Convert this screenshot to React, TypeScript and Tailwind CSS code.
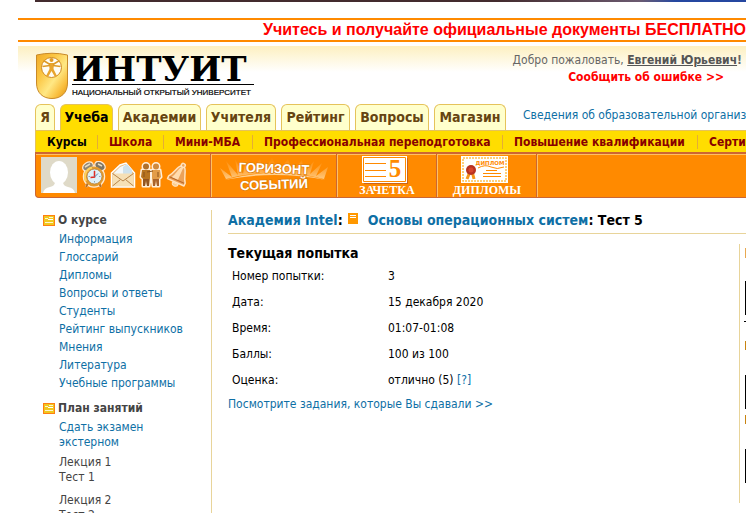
import React from "react";

const tabs = [
  { label: "Я", width: "w-5" },
  { label: "Учеба", width: "w-[53px]", active: true },
  { label: "Академии", width: "w-[83px]" },
  { label: "Учителя", width: "w-[70px]" },
  { label: "Рейтинг", width: "w-[69px]" },
  { label: "Вопросы", width: "w-[74px]" },
  { label: "Магазин", width: "w-[72px]" },
];

const sections = [
  { label: "Курсы", width: "w-[62px]", active: true },
  { label: "Школа", width: "w-[66px]" },
  { label: "Мини-МБА", width: "w-[89px]" },
  { label: "Профессиональная переподготовка", width: "w-[250px]" },
  { label: "Повышение квалификации", width: "w-[195px]" },
  { label: "Сертификация", width: "w-[140px]" },
];

const courseLinks = [
  "Информация",
  "Глоссарий",
  "Дипломы",
  "Вопросы и ответы",
  "Студенты",
  "Рейтинг выпускников",
  "Мнения",
  "Литература",
  "Учебные программы",
];

function Shield() {
  return (
    <svg width="34" height="48" viewBox="0 0 34 48" className="shrink-0" aria-hidden="true">
      <defs>
        <linearGradient id="gold" x1="0" y1="0" x2="1" y2="1">
          <stop offset="0" stopColor="#f0aa28" />
          <stop offset="0.3" stopColor="#fbc440" />
          <stop offset="0.58" stopColor="#ffe884" />
          <stop offset="0.8" stopColor="#f9bd3c" />
          <stop offset="1" stopColor="#dc8f13" />
        </linearGradient>
      </defs>
      <path d="M1.500 3Q17 -0.500 32.500 3V31C32.500 41 26 46.500 17 46.500S1.500 41 1.500 31Z" fill="url(#gold)" stroke="#c98a28" />
      <circle cx="16.500" cy="15.500" r="10" fill="#fffdf4" stroke="#d08a20" />
      <circle cx="16.500" cy="8" r="2" fill="#e09a25" />
      <path d="M14 11H19L18.500 17L22 24L20 25L16.500 19L13 25L11 24L14.500 17Z" fill="#e8a52e" />
      <path d="M15 12.500L8.500 8.500M18 12.500L24.500 8.500M15 13.500L7.500 14.500M18 13.500L25.500 14.500" stroke="#dd9a28" strokeWidth="1.500" fill="none" />
    </svg>
  );
}

function FolderIcon() {
  return (
    <svg width="12" height="11" viewBox="0 0 12 11" className="shrink-0" aria-hidden="true">
      <rect x="0.500" y="0.500" width="11" height="10" fill="#f0c81e" stroke="#ff7f11" />
      <path d="M2 3.500H5M6 2.500H10M2 7.500H10" stroke="#fff6cf" fill="none" />
      <path d="M5 4.500H10" stroke="#fff" fill="none" />
    </svg>
  );
}

function Clock() {
  return (
    <svg width="26" height="28" viewBox="0 0 26 28" aria-hidden="true">
      <g fill="#ffe9cf" stroke="#ffe9cf" strokeWidth="2.500">
        <path d="M7 22L5 26M18 22L20 26" />
        <ellipse cx="7" cy="5.500" rx="5" ry="3.500" transform="rotate(-30 7 5.500)" />
        <ellipse cx="19" cy="5" rx="5" ry="3.500" transform="rotate(35 19 5)" />
        <circle cx="13" cy="15.500" r="10" />
      </g>
      <path d="M7 22L5 26M18 22L20 26" stroke="#b5702a" strokeWidth="2" />
      <ellipse cx="7" cy="5.500" rx="5" ry="3.500" transform="rotate(-30 7 5.500)" fill="#8d8576" />
      <ellipse cx="19" cy="5" rx="5" ry="3.500" transform="rotate(35 19 5)" fill="#7c7566" />
      <path d="M4 6L9 3M17 3L21 5" stroke="#e8dcc0" strokeWidth="1.500" />
      <circle cx="13" cy="15.500" r="10" fill="#e39a2d" />
      <path d="M5 20A9.500 9.500 0 0 1 11 6.500" stroke="#ffd15c" strokeWidth="2" fill="none" />
      <circle cx="13.500" cy="15.500" r="7.500" fill="#dff0f8" stroke="#b4803c" strokeWidth="0.800" />
      <path d="M13.500 9.500V11M13.500 20V21.500M7.500 15.500H9M18 15.500H19.500" stroke="#8fa6b5" />
      <path d="M13.500 10V16L9.500 16.500" stroke="#e02b23" strokeWidth="1.500" fill="none" />
      <path d="M13.500 16L17 12.500" stroke="#5386b0" />
    </svg>
  );
}

function Mail() {
  return (
    <svg width="26" height="28" viewBox="0 0 26 28" aria-hidden="true">
      <path d="M1.500 12L10 4L16 2L24.500 12V26H1.500Z" fill="#e8bd84" stroke="#fff" strokeWidth="1.500" />
      <path d="M4 12L10 6L17 3L22 9V17H4Z" fill="#f4f8fa" />
      <path d="M13 6L17 3L22 9V14L13 14Z" fill="#cfe2ec" />
      <path d="M2.500 12.500H23.500V25H2.500Z" fill="#f6e0b6" />
      <path d="M2.500 12.500L13 20L23.500 12.500M2.500 25L10.500 18.500M23.500 25L15.500 18.500" fill="none" stroke="#b8854c" />
    </svg>
  );
}

function People() {
  return (
    <svg width="24" height="28" viewBox="0 0 24 28" aria-hidden="true">
      <g stroke="#fff0dc" strokeWidth="3" fill="#fff0dc" strokeLinejoin="round">
        <circle cx="7" cy="5.500" r="3" />
        <circle cx="17" cy="5.500" r="3" />
        <path d="M3 9H11V17L10 25H4L4 18L2 16ZM13 9H21L22 16L20 18V25H14L13 17Z" />
      </g>
      <circle cx="7" cy="5.500" r="3" fill="#b0702a" />
      <circle cx="17" cy="5.500" r="3" fill="#d08a3c" />
      <path d="M3 9H11V17L10 25H8L7 18L6 25H4V18L2 16Z" fill="#b87420" />
      <path d="M13 9H21L22 16L20 18V25H18L17 18L16 25H14L13 17Z" fill="#e39c48" />
      <path d="M4 18H10V25H8L7 19L6 25H4Z" fill="#935420" />
      <path d="M14 18H20V25H18L17 19L16 25H14Z" fill="#a9622a" />
      <path d="M8 11L14 10M5 11V16M19 11V16" stroke="#8a5018" />
    </svg>
  );
}

function Bell() {
  return (
    <svg width="26" height="28" viewBox="0 0 26 28" aria-hidden="true">
      <g transform="rotate(24 13 14)">
        <path d="M11 5C8 7 8 14 4 19V22H22V19C18 14 18 7 15 5Z" fill="#eba25a" stroke="#ffe3c0" strokeWidth="1.500" strokeLinejoin="round" />
        <circle cx="13" cy="3.500" r="2" fill="#eba25a" stroke="#ffe3c0" strokeWidth="1.500" />
        <path d="M12 6C9.500 9 10 15 7 19H14V6Z" fill="#ffdcae" />
        <path d="M5 19.500H21" stroke="#b9682a" />
        <path d="M10 23A3 3 0 0 0 16 23Z" fill="#f9cd8d" stroke="#ffe3c0" />
      </g>
    </svg>
  );
}

function Toolbar() {
  return (
    <div className="flex h-[46px] rounded-bl border-t-2 border-b border-l border-[#cc6633] bg-[#ff8a00] shadow-[inset_0_1px_0_#ffc163]">
      <div className="flex w-[175px] shrink-0 items-center gap-[3px] border-r border-[#cc6633] pb-[2px] pl-[5px]">
        <svg width="36" height="36" viewBox="0 0 36 36" className="mr-[1px] shrink-0" aria-hidden="true">
          <path fill="#dfdac8" d="M0 0H36V36H0Z" />
          <ellipse cx="18" cy="15.500" rx="9" ry="11.500" fill="#fff" />
          <path d="M2 36Q3 31 9 30Q14 29 14 25H22Q22 29 27 30Q33 31 34 36Z" fill="#fff" />
        </svg>
        <button type="button" aria-label="Расписание"><Clock /></button>
        <button type="button" aria-label="Сообщения"><Mail /></button>
        <button type="button" aria-label="Друзья"><People /></button>
        <button type="button" aria-label="Уведомления"><Bell /></button>
      </div>
      <button type="button" className="w-[126px] shrink-0 border-x border-r-[#cc6633] border-l-[#ffc163] text-white">
        <svg width="124" height="43" viewBox="0 0 124 43" className="block">
          <defs>
            <linearGradient id="rays" x1="0" y1="1" x2="0" y2="0">
              <stop offset="0" stopColor="#ffd9a0" stopOpacity=".8" />
              <stop offset="1" stopColor="#ffb75a" stopOpacity="0" />
            </linearGradient>
          </defs>
          <path fill="url(#rays)" d="M14 25L8 14L20 23L14 7L26 21L23 5L31 20L34 5L38 19L48 5L52 18L60 3L66 18L76 5L80 18L90 6L92 19L102 7L98 20L110 9L104 22L116 13L112 25Q62 12 14 25Z" />
          <path d="M12 26Q62 12 114 26Q62 16 12 26Z" fill="#ffe2b4" opacity=".8" />
          <g fill="#fff" stroke="#e07f10" strokeWidth="1.500" paintOrder="stroke" fontFamily="Liberation Sans, sans-serif" fontWeight="bold" fontSize="13" textAnchor="middle">
            <text x="62" y="19" transform="rotate(2 62 14)">ГОРИЗОНТ</text>
            <text x="62" y="35" transform="rotate(-2 62 32)">СОБЫТИЙ</text>
          </g>
        </svg>
      </button>
      <button type="button" className="flex w-[100px] shrink-0 flex-col items-center border-x border-r-[#cc6633] border-l-[#ffc163] pt-[2px] text-white">
        <svg width="46" height="28" viewBox="0 0 46 28" className="mr-1 shrink-0">
          <path d="M2 2H46V28H2Z" fill="#c9641c" />
          <path d="M0 0H45V27H0Z" fill="#fff" />
          <path d="M1.500 1.500H43.500V25.500H1.500Z" fill="none" stroke="#ff8a00" />
          <path d="M3 7.500H24M3 14.500H24M3 20.500H24" stroke="#ff8a00" />
          <text x="33" y="21" textAnchor="middle" fill="#ff8a00" fontFamily="Liberation Serif, serif" fontWeight="bold" fontSize="25">5</text>
        </svg>
        <span className="font-['Liberation_Serif',serif] text-[12px] leading-[13px] font-bold">ЗАЧЕТКА</span>
      </button>
      <button type="button" className="flex w-[100px] shrink-0 flex-col items-center border-x border-r-[#cc6633] border-l-[#ffc163] pt-[2px] text-white">
        <svg width="48" height="28" viewBox="0 0 48 28" className="mr-1 shrink-0">
          <path d="M0 0H47V27H0Z" fill="#fff" />
          <path d="M2 2H45V25H2Z" fill="none" stroke="#ffc04c" strokeWidth="1.500" strokeDasharray="2 1" />
          <text x="29" y="9" textAnchor="middle" fill="#ff8a00" fontFamily="DejaVu Sans, sans-serif" fontWeight="bold" fontSize="5.500">ДИПЛОМ</text>
          <path d="M17 12Q24 8 30 11T43 11M25 14.500H36M22 17.500H40M22 20.500H40" fill="none" stroke="#ff8a00" />
          <path d="M8.500 17L6 23M11.500 17L13 23" stroke="#f69518" strokeWidth="3" />
          <circle cx="10" cy="14" r="5" fill="#b83222" />
          <circle cx="10" cy="14" r="2.500" fill="#d8452f" />
        </svg>
        <span className="font-['Liberation_Serif',serif] text-[12px] leading-[13px] font-bold">ДИПЛОМЫ</span>
      </button>
      <div className="grow border-l border-[#ffc163]" />
    </div>
  );
}

function Row({ label, children }: { label: string; children: React.ReactNode }) {
  return (
    <tr className="h-[26px]">
      <th scope="row" className="w-[160px] pl-1 text-left font-normal">{label}</th>
      <td>{children}</td>
    </tr>
  );
}

function SideHeading({ children }: { children: React.ReactNode }) {
  return (
    <h2 className="flex h-5 items-center gap-[3px] text-[12px] font-bold text-[#444]">
      <FolderIcon />
      {children}
    </h2>
  );
}

export default function App() {
  return (
    <div className="h-screen overflow-hidden bg-white font-['DejaVu_Sans_Condensed','DejaVu_Sans',sans-serif] text-[12px] whitespace-nowrap text-black">
      <div className="ml-[35px] h-[2px] bg-linear-to-r from-[#432b2e] from-65% via-[#6b5a70] via-85% to-[#2547a0] to-90%" />
      <div className="mt-4 ml-[18px] h-6 overflow-hidden border-y-2 border-[#ff8a00] pl-[245px] font-['Liberation_Sans',sans-serif] text-[16px] leading-5 font-bold text-[#f00]">
        Учитесь и получайте официальные документы БЕСПЛАТНО
      </div>
      <header className="mt-1 ml-[18px] flex h-[58px] justify-between bg-linear-to-b from-[#fdf0c0] to-white to-45% pl-[17px]">
        <a href="#" className="flex gap-[3px] pt-[6px] text-black">
          <Shield />
          <span className="block w-[182px]">
            <span className="block h-[33px] border-b border-black font-['DejaVu_Serif','Liberation_Serif',serif] text-[34px] leading-[34px] font-bold">ИНТУИТ</span>
            <span className="block font-['Liberation_Sans',sans-serif] text-[8px] leading-4 [-webkit-text-stroke:0.2px_black]">НАЦИОНАЛЬНЫЙ ОТКРЫТЫЙ УНИВЕРСИТЕТ</span>
          </span>
        </a>
        <div className="flex flex-col items-end pt-[6px] pr-1 leading-[17px] text-[#666]">
          <div>Добро пожаловать, <a href="#" className="font-bold text-[#555] underline">Евгений Юрьевич</a><b>!</b></div>
          <a href="#" className="pr-[18px] font-bold text-[#f00]">Сообщить об ошибке &gt;&gt;</a>
        </div>
      </header>
      <nav className="ml-[35px]">
        <div className="flex h-[26px] gap-[5px]">
          {tabs.map((tab) => (
            <a
              key={tab.label}
              href="#"
              className={`${tab.width} flex shrink-0 justify-center rounded-t-md border border-b-0 border-[#e5c35b] text-[14px] leading-[25px] font-bold ${tab.active ? "-mb-px bg-[#ffdd00] text-black" : "bg-[#ffffcc] text-[#664411]"}`}
            >
              {tab.label}
            </a>
          ))}
          <a href="#" className="ml-3 leading-[22px] text-[#0e6fa5]">Сведения об образовательной организации</a>
        </div>
        <div className="flex h-[22px] items-center border-t border-l border-[#e5c35b] bg-[#ffdd00] text-[12px] font-bold">
          {sections.map((item) => (
            <a
              key={item.label}
              href="#"
              className={`${item.width} shrink-0 border-r border-[#e5ad35] pl-[11px] leading-[14px] ${item.active ? "text-black" : "text-[#880000]"}`}
            >
              {item.label}
            </a>
          ))}
        </div>
        <Toolbar />
      </nav>
      <div className="flex pt-3">
        <aside className="h-[340px] w-[212px] shrink-0 border-r border-[#e8d49a] pl-[43px]">
          <SideHeading>О курсе</SideHeading>
          <ul className="pl-4 leading-[18px]">
            {courseLinks.map((label) => (
              <li key={label}><a href="#" className="text-[#0e6fa5]">{label}</a></li>
            ))}
          </ul>
          <div className="h-[6px]" />
          <SideHeading>План занятий</SideHeading>
          <div className="pt-[2px] pl-4 leading-[15px] text-[#444]">
            <a href="#" className="block pb-[5px] text-[#0e6fa5]">Сдать экзамен<br />экстерном</a>
            <p className="pb-2">Лекция 1<br />Тест 1</p>
            <p className="pb-2">Лекция 2<br />Тест 2</p>
          </div>
        </aside>
        <main className="min-w-0 grow pl-4">
          <h1 className="flex h-6 items-start border-b border-[#e8d49a] text-[14px] leading-5 font-bold">
            <a href="#" className="text-[#0e6fa5]">Академия Intel</a>:
            <svg width="10" height="11" viewBox="0 0 10 11" className="mt-[3px] mr-[10px] ml-[5px]" aria-hidden="true">
              <path d="M0 0H10V11H0Z" fill="#ff9800" />
              <path d="M2 2.500H8M2 4.500H8" stroke="#fff" />
            </svg>
            <a href="#" className="text-[#0e6fa5]">Основы операционных систем</a>:&nbsp;<span>Тест 5</span>
          </h1>
          <div className="flex justify-between pt-[10px]">
            <section>
              <h2 className="pb-px text-[14px] leading-[18px] font-bold">Текущая попытка</h2>
              <table className="border-collapse">
                <tbody>
                  <Row label="Номер попытки:">3</Row>
                  <Row label="Дата:">15 декабря 2020</Row>
                  <Row label="Время:">01:07-01:08</Row>
                  <Row label="Баллы:">100 из 100</Row>
                  <Row label="Оценка:">отлично (5) <a href="#" className="text-[#0e6fa5]">[?]</a></Row>
                </tbody>
              </table>
              <a href="#" className="leading-[22px] text-[#0e6fa5]">Посмотрите задания, которые Вы сдавали &gt;&gt;</a>
            </section>
            <div className="flex h-[259px] w-[7px] flex-col items-end border-l border-[#e8d49a] pt-1">
              <i className="h-[10px] w-px bg-[#e8a850]" />
              <i className="mt-[23px] h-[34px] w-px bg-black" />
              <i className="mt-[6px] h-px w-[2px] bg-black" />
              <i className="mt-[19px] h-[9px] w-px bg-[#c88412]" />
              <i className="mt-[25px] h-[34px] w-px bg-black" />
              <i className="mt-[6px] h-[9px] w-px bg-[#c88412]" />
              <i className="mt-[25px] h-[34px] w-px bg-black" />
            </div>
          </div>
        </main>
      </div>
    </div>
  );
}
